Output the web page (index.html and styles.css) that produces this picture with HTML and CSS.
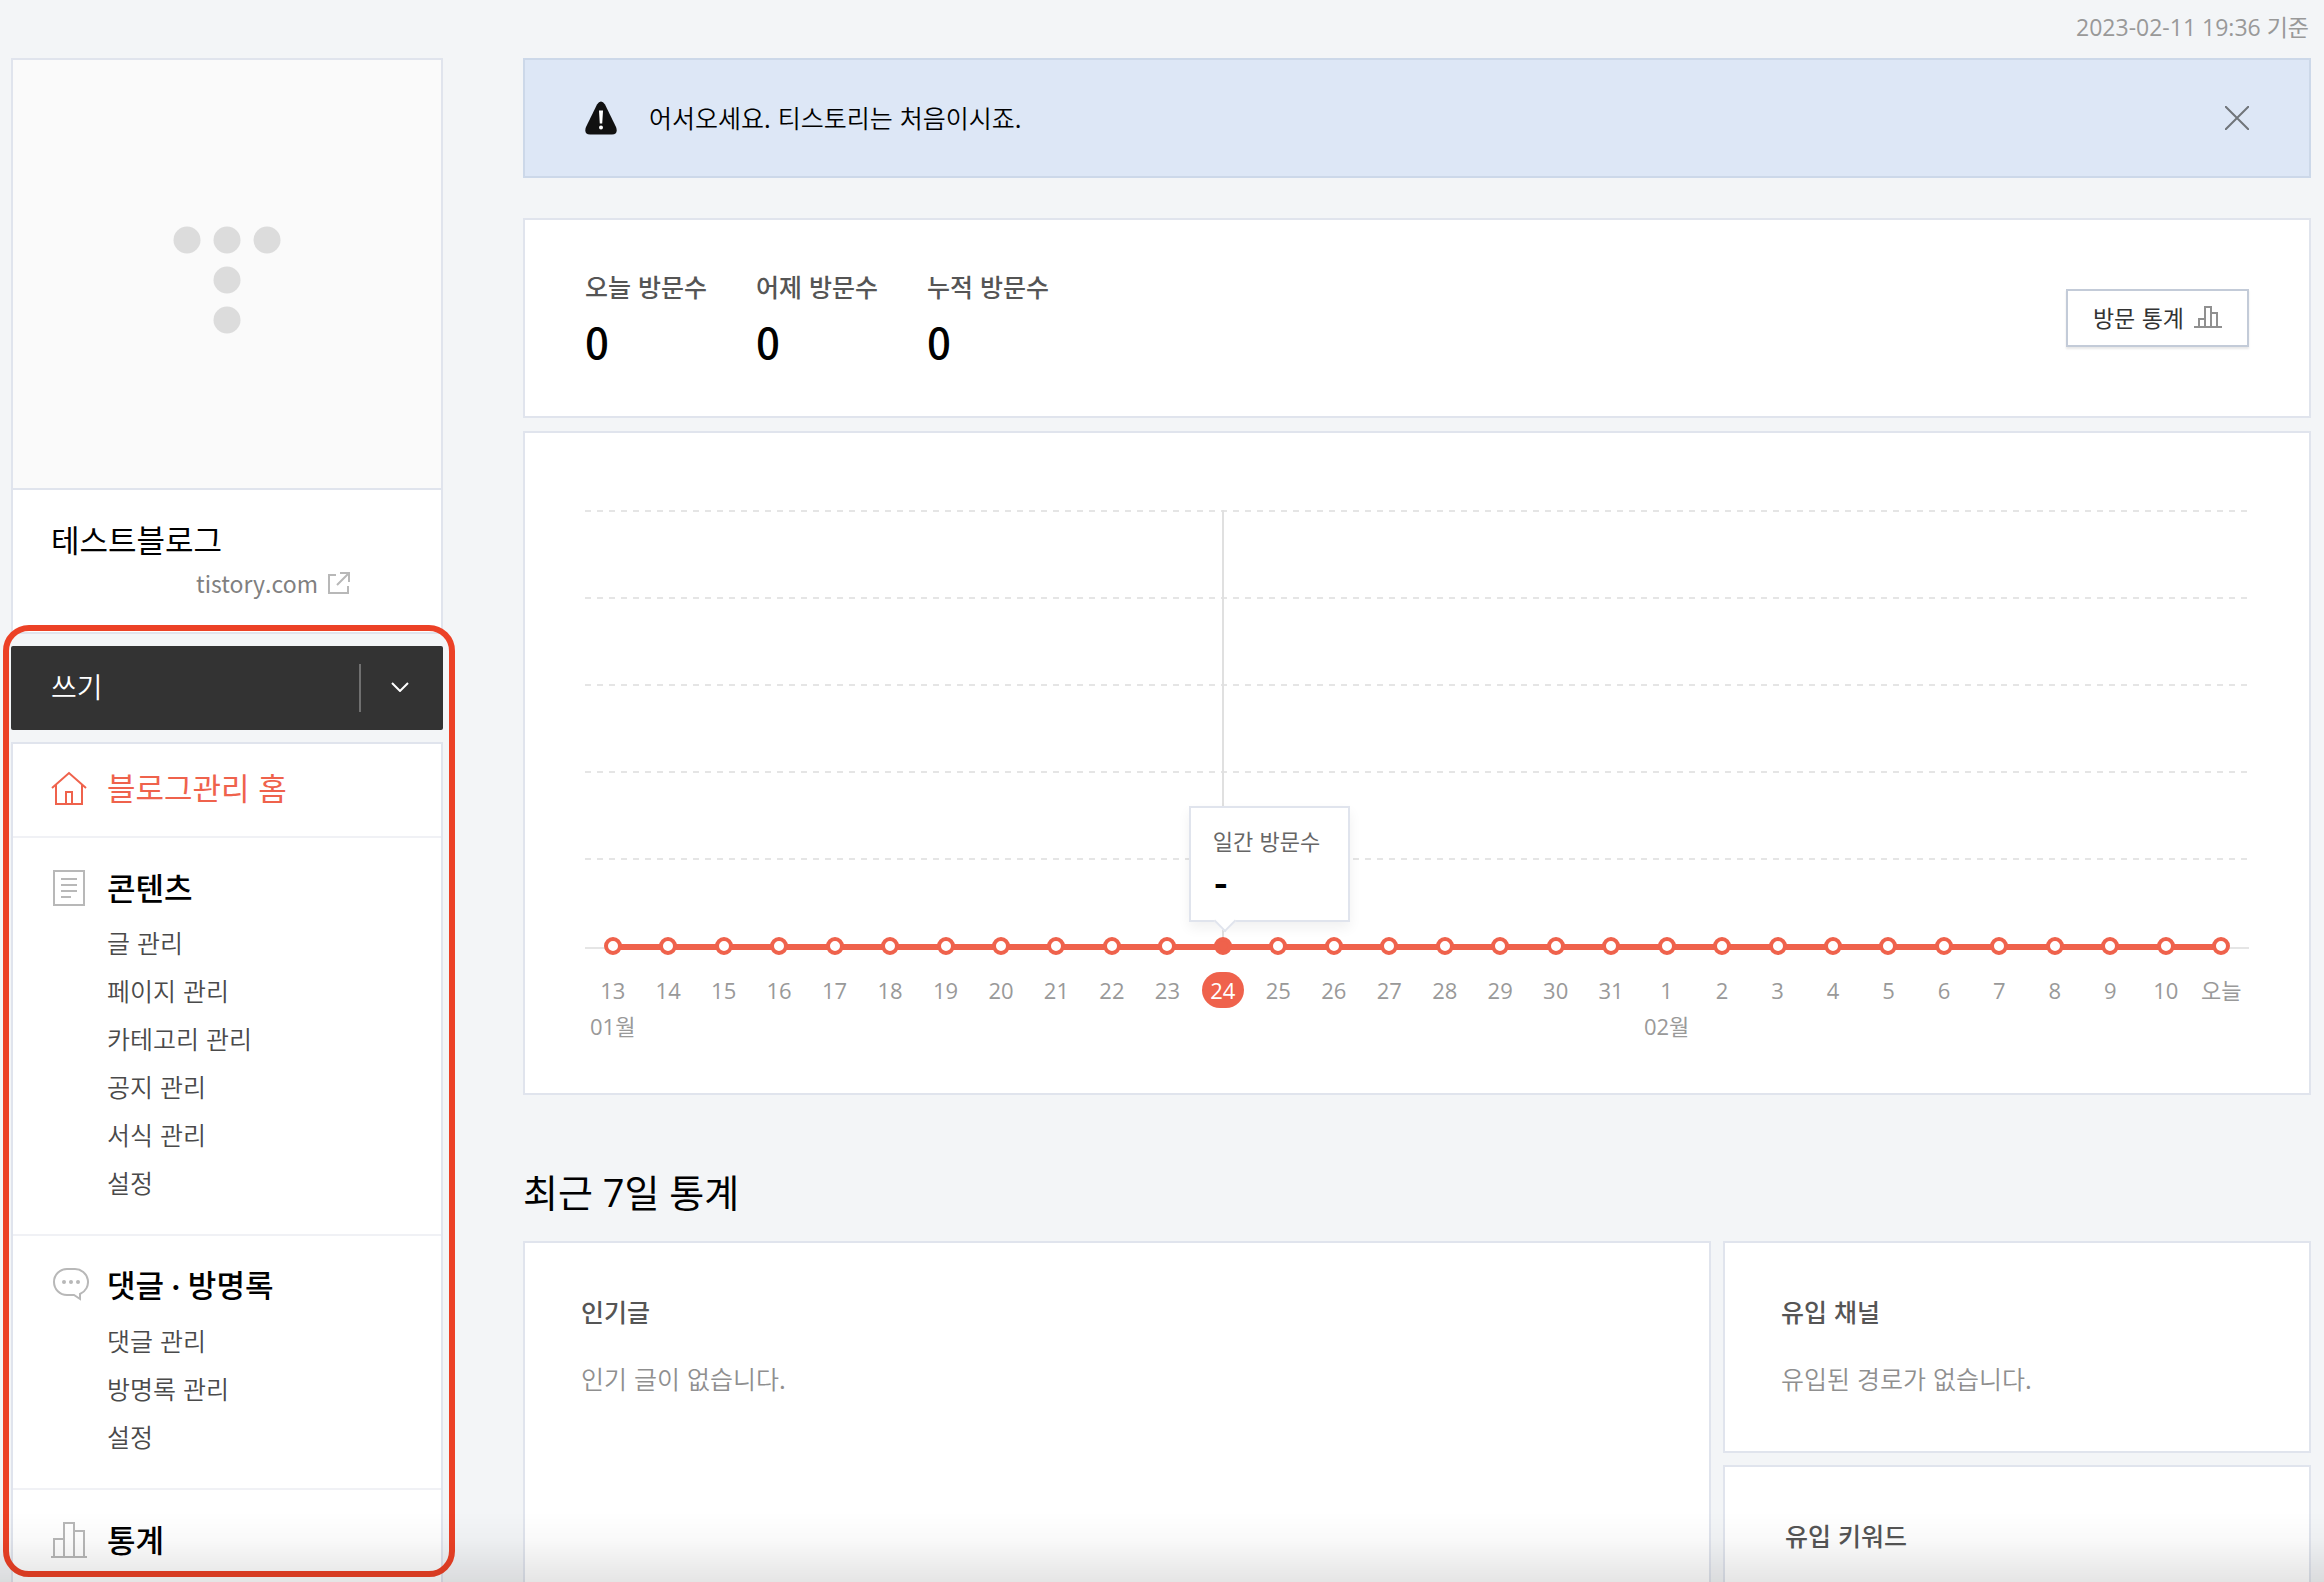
FILE: index.html
```
<!DOCTYPE html>
<html lang="ko">
<head>
<meta charset="utf-8">
<title>블로그관리 홈</title>
<link rel="stylesheet" href="styles.css">
</head>
<body>
<div class="page">
  <aside class="sidebar">
    <section class="profile">
      <div class="cover">
        <svg class="cover-logo" width="110" height="110" viewBox="0 0 110 110" fill="#dcdcdc" aria-hidden="true">
          <circle cx="15" cy="15" r="13.5"/><circle cx="55" cy="15" r="13.5"/><circle cx="95" cy="15" r="13.5"/>
          <circle cx="55" cy="55" r="13.5"/><circle cx="55" cy="95" r="13.5"/>
        </svg>
      </div>
      <div class="profile-info">
        <h1 class="blog-name">테스트블로그</h1>
        <a class="blog-link" href="#">tistory.com
          <svg width="22" height="22" viewBox="0 0 22 22" fill="none" stroke="#b8b8b8" stroke-width="2" aria-hidden="true">
            <path d="M8 3H1v18h19v-7M12 1h9v9M21 1L9 13"/>
          </svg>
        </a>
      </div>
    </section>
    <div class="menu">
      <div class="write">
        <a class="write-link" href="#">쓰기</a>
        <button class="write-more" type="button" aria-label="더보기">
          <svg width="18" height="10" viewBox="0 0 18 10" fill="none" stroke="#fff" stroke-width="2" aria-hidden="true"><path d="M1 1l8 8 8-8"/></svg>
        </button>
      </div>
      <nav class="nav">
        <section class="nav-group nav-home">
          <svg width="36" height="36" viewBox="0 0 36 36" fill="none" stroke="#ef624c" stroke-width="2" aria-hidden="true">
            <path d="M1 18L18 3l17 15M5 15v19h26V15M15 34V22h6v12"/>
          </svg>
          <h2 class="nav-title"><a href="#">블로그관리 홈</a></h2>
        </section>
        <section class="nav-group">
          <svg width="36" height="36" viewBox="0 0 36 36" fill="none" stroke="#b8b8b8" stroke-width="2" aria-hidden="true">
            <path d="M3 1h30v34H3zM10 9h16M10 15h16M10 21h16M10 27h10"/>
          </svg>
          <h2 class="nav-title"><a href="#">콘텐츠</a></h2>
          <ul class="nav-list">
            <li><a href="#">글 관리</a></li>
            <li><a href="#">페이지 관리</a></li>
            <li><a href="#">카테고리 관리</a></li>
            <li><a href="#">공지 관리</a></li>
            <li><a href="#">서식 관리</a></li>
            <li><a href="#">설정</a></li>
          </ul>
        </section>
        <section class="nav-group">
          <svg width="38" height="36" viewBox="0 2 38 36" fill="none" stroke="#b8b8b8" stroke-width="2" aria-hidden="true">
            <path d="M16 3h8a13 13 0 0 1 5 25v5l-6-4h-7a13 13 0 0 1 0-26z"/>
            <g fill="#b8b8b8" stroke="none"><circle cx="13" cy="16" r="2"/><circle cx="20" cy="16" r="2"/><circle cx="27" cy="16" r="2"/></g>
          </svg>
          <h2 class="nav-title nav-title-dot"><a href="#">댓글 · 방명록</a></h2>
          <ul class="nav-list">
            <li><a href="#">댓글 관리</a></li>
            <li><a href="#">방명록 관리</a></li>
            <li><a href="#">설정</a></li>
          </ul>
        </section>
        <section class="nav-group">
          <svg width="36" height="36" viewBox="0 0 36 36" fill="none" stroke="#b8b8b8" stroke-width="2" aria-hidden="true">
            <path d="M0 35h36M3 34V17h10M13 34V1h10v33M23 9h10v25"/>
          </svg>
          <h2 class="nav-title"><a href="#">통계</a></h2>
        </section>
      </nav>
      <div class="highlight"></div>
    </div>
  </aside>

  <main class="content">
    <p class="updated">2023-02-11 19:36 기준</p>
    <div class="notice">
      <svg width="32" height="34" viewBox="0 0 32 34" aria-hidden="true">
        <path d="M12 3.500q4-6 8 0L31 26q2.500 7-4 7.500H5Q-1.500 33 1 26z" fill="#111"/>
        <path d="M14 9.500h4l-.8 13h-2.400z" fill="#fff"/><circle cx="16" cy="26.500" r="2" fill="#fff"/>
      </svg>
      <p class="notice-text">어서오세요. 티스토리는 처음이시죠.</p>
      <button class="notice-close" type="button" aria-label="닫기">
        <svg width="24" height="24" viewBox="0 0 24 24" fill="none" stroke="#70757a" stroke-width="2" aria-hidden="true"><path d="M0 0l24 24M24 0L0 24"/></svg>
      </button>
    </div>

    <section class="card summary">
      <dl class="counts">
        <div><dt>오늘 방문수</dt><dd>0</dd></div>
        <div><dt>어제 방문수</dt><dd>0</dd></div>
        <div><dt>누적 방문수</dt><dd>0</dd></div>
      </dl>
      <button class="stat-button" type="button">방문 통계
        <svg width="28" height="22" viewBox="0 0 28 22" fill="none" stroke="#909090" stroke-width="2" aria-hidden="true">
          <path d="M0 21h28M5 21v-8h6M11 21V1h6v20M17 7h6v14"/>
        </svg>
      </button>
    </section>

    <section class="card chart">
      <div class="plot">
        <i></i><i></i><i></i><i></i><i></i>
        <div class="guide"></div>
        <div class="tooltip"><span>일간 방문수</span><strong>-</strong></div>
      </div>
      <ol class="days">
        <li><span>13</span><em>01월</em></li><li><span>14</span></li><li><span>15</span></li><li><span>16</span></li><li><span>17</span></li><li><span>18</span></li><li><span>19</span></li><li><span>20</span></li><li><span>21</span></li><li><span>22</span></li><li><span>23</span></li><li class="active"><span>24</span></li><li><span>25</span></li><li><span>26</span></li><li><span>27</span></li><li><span>28</span></li><li><span>29</span></li><li><span>30</span></li><li><span>31</span></li><li><span>1</span><em>02월</em></li><li><span>2</span></li><li><span>3</span></li><li><span>4</span></li><li><span>5</span></li><li><span>6</span></li><li><span>7</span></li><li><span>8</span></li><li><span>9</span></li><li><span>10</span></li><li><span>오늘</span></li>
      </ol>
    </section>

    <h2 class="section-title">최근 7일 통계</h2>
    <div class="recent">
      <section class="card panel panel-tall"><h3>인기글</h3><p>인기 글이 없습니다.</p></section>
      <section class="card panel"><h3>유입 채널</h3><p>유입된 경로가 없습니다.</p></section>
      <section class="card panel panel-keyword"><h3>유입 키워드</h3></section>
    </div>
  </main>
</div>
<div class="fade"></div>
</body>
</html>
```

FILE: styles.css
```
*, *::before, *::after { box-sizing: border-box; }
html, body { height: 100%; }
body {
  margin: 0;
  overflow: hidden;
  background: #f3f5f7;
  color: #000;
  font-family: "Noto Sans CJK KR", sans-serif;
  font-size: 25px;
}
h1, h2, h3, p, ul, ol, dl, dd { margin: 0; padding: 0; font-weight: 400; }
ul, ol { list-style: none; }
a { color: inherit; text-decoration: none; }
button { font: inherit; border: 0; background: none; padding: 0; cursor: pointer; }
svg { display: block; flex: none; }

.page { display: flex; gap: 80px; padding: 0 13px 0 11px; }
.sidebar { flex: none; width: 432px; padding-top: 58px; }
.content { flex: 1; min-width: 0; }

.profile { border: 2px solid #e0e4ed; background: #fff; }
.cover { display: flex; align-items: center; justify-content: center; aspect-ratio: 1; padding-top: 12px; background: #fafafa; }
.profile-info { border-top: 2px solid #e0e4ed; padding: 27px 38px 27px; }
.blog-name { font-size: 31px; line-height: 44px; }
.blog-link { display: flex; align-items: center; gap: 10px; margin-left: 145px; color: #808080; font-size: 23px; line-height: 44px; }

.menu { position: relative; margin-top: 12px; }
.write { display: flex; align-items: center; height: 84px; border-radius: 2px; background: #333; color: #fff; }
.write-link { flex: 1; padding: 0 0 4px 40px; font-size: 28px; font-weight: 350; }
.write-more { display: flex; align-items: center; justify-content: center; width: 84px; height: 48px; padding: 0 4px 2px 0; border-left: 2px solid #707070; }
.nav { margin-top: 12px; border: 2px solid #e0e4ed; background: #fff; }
.nav-group { display: grid; grid-template-columns: 36px 1fr; column-gap: 20px; align-items: center; padding: 27px 38px 28px; border-top: 2px solid #f0f1f5; }
.nav-group.nav-home { border-top: 0; padding: 21px 38px 25px; color: #ef624c; }
.nav-title { padding-bottom: 2px; font-size: 31px; line-height: 44px; font-weight: 500; }
.nav-title-dot { font-family: Lato, "Noto Sans CJK KR", sans-serif; }
.nav-home .nav-title { font-weight: 400; }
.nav-list { grid-column: 2; padding-top: 7px; }
.nav-list li { line-height: 48px; color: #4a4a4a; font-weight: 350; }
.highlight { position: absolute; inset: -21px -12px auto -8px; height: 952px; border: 6px solid #ec4126; border-radius: 26px; pointer-events: none; }

.updated { height: 58px; padding-right: 2px; color: #999; font-family: "Open Sans", "Noto Sans CJK KR", sans-serif; font-size: 23px; line-height: 54px; text-align: right; }
.notice { display: flex; align-items: center; height: 120px; padding: 0 60px; border: 2px solid #ccd8e9; background: #dde7f6; }
.notice-text { flex: 1; padding: 0 0 2px 32px; font-weight: 350; }
.card { border: 2px solid #e0e4ed; background: #fff; }
.summary { display: flex; align-items: center; justify-content: space-between; height: 200px; margin-top: 40px; padding: 0 60px; }
.counts { display: flex; gap: 49px; }
.counts dt { color: #555; line-height: 38px; font-weight: 500; }
.counts dd { font-family: "Noto Sans CJK KR", sans-serif; font-size: 42px; font-weight: 500; line-height: 56px; margin-top: 8px; }
.stat-button { display: flex; align-items: center; gap: 10px; height: 58px; padding: 0 25px 2px; border: 2px solid #c3cbd8; background: #fff; color: #333; font-size: 23px; box-shadow: 0 2px 2px #e8e8e8; }

.chart { margin-top: 13px; padding: 77px 60px 49px; }
.plot { position: relative; border-bottom: 2px solid #e5e5e5; }
.plot i { display: block; height: 87px; background: repeating-linear-gradient(90deg, #e5e5e5 0 6px, #fff 6px 12px) top / 100% 2px no-repeat; }
.plot i:nth-child(5) { height: 89px; }
.guide { position: absolute; top: 0; bottom: 0; left: calc(100% * 11.5 / 30 - 1px); width: 2px; background: #e0e0e0; }
.tooltip { position: absolute; bottom: 25px; left: calc(100% * 11.5 / 30 - 34px); display: flex; flex-direction: column; height: 116px; padding: 14px 28px 14px 22px; border: 2px solid #e0e4ed; background: #fff; box-shadow: 0 6px 12px #0000000f; font-size: 22px; line-height: 36px; color: #666; }
.tooltip strong { padding: 4px 0 0 1px; color: #000; font-size: 38px; font-weight: 700; line-height: 44px; }
.tooltip::after { content: ""; position: absolute; left: 26px; bottom: -9px; width: 16px; height: 16px; border: solid #e0e4ed; border-width: 0 2px 2px 0; background: #fff; transform: rotate(45deg); }
.days { display: grid; grid-template-columns: repeat(30, 1fr); color: #999; font-family: "Open Sans", "Noto Sans CJK KR", sans-serif; font-size: 22px; line-height: 36px; }
.days li { position: relative; display: flex; flex-direction: column; align-items: center; padding-top: 23px; white-space: nowrap; }
.days li::before { content: ""; position: absolute; top: -5px; left: 0; right: 0; height: 6px; background: #ef624c; }
.days li:first-child::before { left: 50%; }
.days li:last-child::before { right: 50%; }
.days li::after { content: ""; position: absolute; top: -12px; left: calc(50% - 9px); width: 18px; height: 18px; border: 4px solid #ef624c; border-radius: 50%; background: #fff; }
.days .active::after { background: #ef624c; }
.days span { min-width: 42px; text-align: center; }
.days .active span { border-radius: 18px; background: #ef624c; color: #fff; }
.days em { font-style: normal; }

.section-title { margin-top: 69px; font-family: "Open Sans", "Noto Sans CJK KR", sans-serif; font-size: 38px; line-height: 56px; }
.recent { display: grid; grid-template-columns: minmax(0, 1188fr) minmax(0, 588fr); grid-template-rows: 212px 212px; gap: 12px; margin-top: 21px; }
.panel { padding: 48px 56px; }
.panel-tall { grid-row: span 2; }
.panel h3 { color: #555; font-size: 25px; line-height: 40px; font-weight: 500; }
.panel p { margin-top: 27px; color: #8f8f8f; line-height: 40px; font-weight: 350; }
.panel-keyword { padding-left: 60px; }
.fade { position: fixed; inset: auto 0 0; height: 70px; background: linear-gradient(#0000, #00000006 40%, #0000001a); pointer-events: none; }
```
